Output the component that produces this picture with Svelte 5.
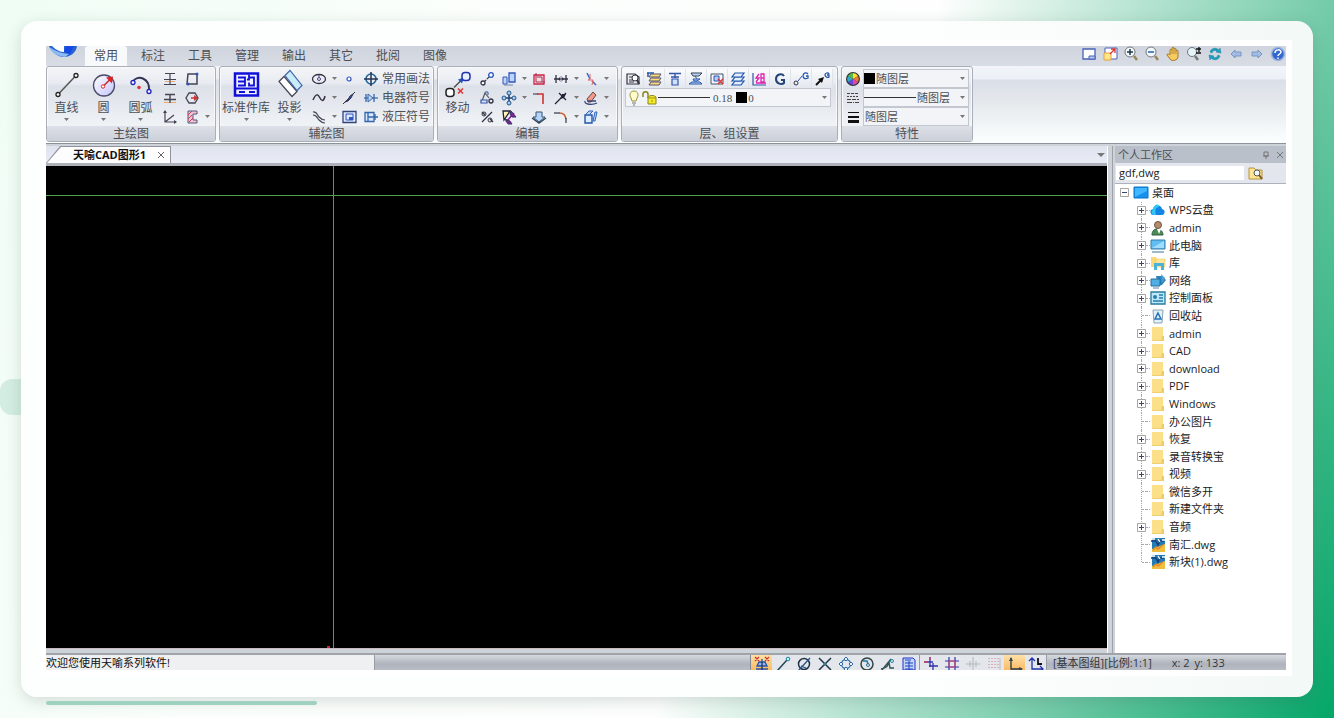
<script lang="ts">
    type Tool = { icon: string; name: string; drop?: boolean; label?: string };
    type Node = { icon: string; name: string; expand?: boolean };

    const big: Record<string, string> = {
        line: '<path d="M5 24 23 5" stroke="#555" stroke-width="1.5"/><circle cx="5" cy="24" r="2" fill="#fff" stroke="#222" stroke-width="1.3"/><circle cx="23" cy="5" r="2" fill="#fff" stroke="#222" stroke-width="1.3"/>',
        circle: '<defs><linearGradient id="disc" x2="1" y2="1"><stop offset="0" stop-color="#fff"/><stop offset="1" stop-color="#c4c4fb"/></linearGradient></defs><circle cx="14" cy="15" r="10.5" fill="url(#disc)" stroke="#4a4a6a" stroke-width="1.3"/><path d="m14 15 6-6" stroke="#c22" stroke-width="1.5"/><path d="m23 6-1 7-6-6z" fill="#d22"/><circle cx="13" cy="16" r="1.7" fill="#fff" stroke="#d22"/>',
        arc: '<path d="M6 11C10 4 23 7 22 20" stroke="#335" stroke-width="2"/><circle cx="6" cy="12" r="2" fill="#fff" stroke="#22b" stroke-width="1.3"/><circle cx="22" cy="21" r="2" fill="#fff" stroke="#22b" stroke-width="1.3"/><circle cx="12" cy="17" r="1.8" fill="#d33"/>',
        library: '<path d="M3 3h23v22H3z" fill="#eef0ff" stroke="#1010d8" stroke-width="2.5"/><path d="M6 7h7v4H6m0 4h7v-4M17 4v5h-2m2-2h5v8h-5v-3M4 18h21M7 21.500h6m4 0h6" stroke="#1010d8" stroke-width="1.8"/>',
        project: '<path d="m3 11 5-5 13 15-5 5z" fill="#fff" stroke="#445" stroke-width="1.2"/><path d="m9 5 5-5 12 15-5 5z" fill="#c8ecfa" stroke="#46a" stroke-width="1.2"/>',
        move: '<path d="m10 17 8-8" stroke="#444" stroke-width="1.3"/><path d="m20 7-2 6-4-4z" fill="#25b"/><rect x="18" y="2" width="8" height="8" rx="3" fill="#e8efff" stroke="#23a" stroke-width="1.5"/><rect x="2" y="18" width="8" height="8" rx="3" fill="#fff" stroke="#222" stroke-width="1.5"/><path d="m14 18 5 5m0-5-5 5" stroke="#d33" stroke-width="1.5"/>',
    };

    const small: Record<string, string> = {
        parallel: '<path d="M3 2.500h10M8 3v10M2 8.500h12M2 13.500h12" stroke="#445" stroke-width="1.2"/><path d="M3 10.500h4m2 0h4" stroke="#f0a868"/>',
        midline: '<path d="M3 4.500h10M2 9.500h12M8 5v8" stroke="#445" stroke-width="1.4"/><path d="M2 12.500h5m2 0h5" stroke="#f0a868"/>',
        angle: '<path d="M3 2v11h11M3 13l9-7" stroke="#445" stroke-width="1.2"/><path d="m1 4 2-3 2 3zM12 11l3 2-3 2z" fill="#445"/>',
        rect: '<path d="M4 3h9v10H3z" stroke="#445" stroke-width="1.5"/><circle cx="13" cy="3" r="1.5" fill="#35b"/><circle cx="4" cy="13" r="1.5" fill="#35b"/>',
        polygon: '<path d="m5 3 6 0 3 5-3 5H5L2 8z" stroke="#445" stroke-width="1.3"/><path d="M7 8h6" stroke="#c33" stroke-width="1.5"/><path d="m10 5 4 3-4 3z" fill="#c33"/>',
        hatch: '<path d="M4 2h9v3H9v6h4v3H4z" fill="#f7c4d0" stroke="#535580"/><path d="m4 6 4-4M4 10l4-4M5 13l4-4" stroke="#d35"/>',
        ellipse: '<ellipse cx="8" cy="8" rx="6.5" ry="4.500" stroke="#334" stroke-width="1.3"/><circle cx="8" cy="8" r="1.5" stroke="#448"/><path d="M8 4v2" stroke="#448"/>',
        spline: '<path d="M2 10c3-7 5-6 7-2s4 3 5-2" stroke="#334" stroke-width="1.5"/>',
        wave: '<path d="M2 3c4-1 4 3 6 5s3 3 6 3M2 6c4 0 4 3 6 5s3 3 6 3" stroke="#445" stroke-width="1.2"/>',
        point: '<circle cx="8" cy="8" r="2" fill="#fff" stroke="#35b" stroke-width="1.2"/>',
        stroke: '<path d="M2 14 14 2" stroke="#334"/><path d="m4 12 3-2 2-4 3-2-2 4-3 3z" fill="#35a" stroke="#335"/>',
        frame: '<path d="M2 2.500h13v11H2z" fill="#dde9ff" stroke="#347" stroke-width="1.3"/><path d="M5 5h7v6H5z" stroke="#35b"/><path d="M8 8h4v3H8z" fill="#35b"/>',
        target: '<circle cx="8" cy="8" r="5" stroke="#269" stroke-width="1.6"/><path d="M8 1v14M1 8h14" stroke="#235" stroke-width="1.5"/>',
        diode: '<path d="M1 8h14" stroke="#36a" stroke-width="1.2"/><path d="M5 4v8l5-4z" fill="#bcd4f4" stroke="#36a"/><path d="M11 4v8M3 4v8" stroke="#36a" stroke-width="1.3"/>',
        hydraulic: '<path d="M2 3.500h9v9H2z" fill="#dbe8fb" stroke="#36a" stroke-width="1.3"/><path d="M5 4v8M5 8h10M12 5v6" stroke="#36a" stroke-width="1.3"/>',
        copy: '<path d="m5 11 6-6" stroke="#334" stroke-width="1.2" stroke-dasharray="3 1"/><circle cx="4" cy="12" r="2" fill="#fff" stroke="#334" stroke-width="1.3"/><circle cx="12" cy="4" r="2.3" fill="#fff" stroke="#25b" stroke-width="1.3"/>',
        rotate: '<path d="M3 11 6 3l4 5" stroke="#556" stroke-width="1.2"/><path d="M2 10h6v3H2z" fill="#dce8fb" stroke="#35a" stroke-width="1.2"/><circle cx="12" cy="11" r="2" stroke="#334" stroke-width="1.3"/><path d="M6 2h3v3" stroke="#35a"/>',
        percent: '<path d="M13 3 3 13M3 3l3 3m5 4 3 3" stroke="#334" stroke-width="1.3"/><circle cx="5" cy="5" r="2" stroke="#334"/><circle cx="11" cy="11" r="2" stroke="#334"/>',
        scale: '<path d="M2 6h4v7H2z" fill="#bdd6f6" stroke="#35b"/><path d="M8 2h6v9H8z" fill="#b9d5fb" stroke="#35b" stroke-width="1.3"/><path d="M3 14h9" stroke="#68a"/>',
        array: '<g fill="#a9caf3" stroke="#258"><circle cx="8" cy="3" r="2"/><circle cx="8" cy="13" r="2"/><circle cx="3" cy="8" r="2"/><circle cx="13" cy="8" r="2"/></g><path d="M8 5v6M5 8h6" stroke="#247" stroke-width="1.6"/>',
        stretch: '<path d="M2 2h7L3 11z" fill="#fff6b8" stroke="#223" stroke-width="1.3"/><path d="m5 13 8-9" stroke="#829" stroke-width="1.5"/><path d="m10 2 5 6-4 0-2-3zM4 10l3 5h4l-2-3z" fill="#829" stroke="#336"/>',
        crop: '<path d="M3 4h10v9H3z" fill="#fbd8df" stroke="#c24" stroke-width="1.3"/><path d="M5 2v9h9M6 6h5v5" stroke="#935"/>',
        corner: '<path d="M6 4h6v10" stroke="#c33" stroke-width="1.6"/><path d="M2 4h5" stroke="#556" stroke-width="1.3"/>',
        down: '<path d="M5 3h6v5h3l-6 5-6-5h3z" fill="#b4d4f9" stroke="#357"/><path d="m1 9 7 5 7-5" stroke="#345" stroke-width="1.5"/>',
        trim: '<path d="M1 8h14M3 4v8M13 4v8" stroke="#334" stroke-width="1.3"/><path d="M8 5v6" stroke="#88a"/><path d="m5 8 2-2v4zM11 8 9 6v4z" fill="#334"/>',
        extend: '<path d="M2 14 13 3" stroke="#223" stroke-width="1.3"/><path d="m6 3 7 7" stroke="#223" stroke-width="1.3"/><path d="M9 4h4l-2 4-4 1z" fill="#223"/>',
        fillet: '<path d="M1 4h6" stroke="#445" stroke-width="1.3"/><path d="M6 4c5 0 6 2 7 6" stroke="#c65a2c" stroke-width="1.5"/><path d="M13 9v5" stroke="#445" stroke-width="1.3"/>',
        break: '<path d="m4 2 3 6M9 10l4 4" stroke="#46b" stroke-width="1.5"/><path d="M7 3v5l-2 1 5 0-1 5" stroke="#d66"/>',
        erase: '<path d="M4 9 10 2l3 3-5 7H5z" fill="#f29a87" stroke="#644"/><path d="M2 11c-1 4 8 4 12 2M5 11h8" stroke="#347" stroke-width="1.3"/>',
        box: '<path d="M2 6h7v8H2z" fill="#dcebff" stroke="#25a" stroke-width="1.4"/><path d="m3 5 3-3h4L7 5M12 3h2l-2 9h-2z" fill="#b4d0f7" stroke="#36b"/>',
        layerList: '<path d="M2 3h8l4 3v7H2z" fill="#eee" stroke="#334" stroke-width="1.2"/><path d="M4 6h4M4 9h4M4 11h5" stroke="#334"/><circle cx="10" cy="7" r="3" fill="#fff" stroke="#334"/><path d="m12 9 2 4" stroke="#334" stroke-width="2"/>',
        layerPick: '<path d="M5 3h10l-2 3H3zM5 7h10l-2 3H3zM5 11h10l-2 3H3z" fill="#fdd982" stroke="#556"/><path d="M1 2h7M2 2v4" stroke="#25a" stroke-width="1.5"/>',
        layerTop: '<path d="M2 2.500h12M8 3v4M4 6h8" stroke="#35a" stroke-width="1.4"/><path d="M5 8h6v6H5z" fill="#cfe0fb" stroke="#35a" stroke-width="1.2"/>',
        layerMerge: '<path d="M3 2h11l-3 3H5z" fill="#bdd6f6" stroke="#345"/><path d="M5 8h7l-3 2H6zM1 13h13l-2-2H4z" fill="#bdd6f6" stroke="#25a"/><path d="m7 5 2 3" stroke="#35a"/>',
        layerOff: '<path d="M2 3h12v10H2z" fill="#f3f6ff" stroke="#456"/><path d="M5 5h5v5H5z" fill="#b4cdfb" stroke="#35a"/><path d="m9 8 5 5m0-5-5 5" stroke="#d33" stroke-width="1.5"/>',
        layers: '<g fill="#e2edfd" stroke="#25a" stroke-width="1.2"><path d="M5 10h9l-3 4H2z"/><path d="M5 6h9l-3 4H2z"/><path d="M5 2h9l-3 4H2z"/></g>',
        group: '<path d="M2 2v12h13" stroke="#35a" stroke-width="1.2"/><path d="m8 3-3 4h3l-3 4M10 3h3v8h-3zM10 7h3M5 12h10" stroke="#e022b0" stroke-width="1.3"/>',
        g: '<path d="M12 5C10 2 4 3 4 8s6 6 8 4V9H9" stroke="#247" stroke-width="2"/>',
        gLink: '<circle cx="3" cy="12" r="2" stroke="#334"/><path d="m5 10 4-5" stroke="#35a"/><path d="M15 3c-2-2-5-1-5 2s3 3 5 2V5h-2" stroke="#25a" stroke-width="1.3"/>',
        gArrow: '<path d="m2 14 5-5" stroke="#111" stroke-width="2"/><path d="m10 6-6 2 4 4z" fill="#111"/><path d="M15 3c-1-2-4-1-4 1s3 3 4 2V4h-2" stroke="#25a" stroke-width="1.3"/>',
        bulb: '<path d="M8 1C4 1 3 5 5 8l1 3h4l1-3c2-3 1-7-3-7z" fill="#fffccb" stroke="#99913f"/><path d="M6 13h4M7 15h2" stroke="#777"/>',
        lock: '<path d="M1 7V4c0-3 5-3 5 0v4" stroke="#8a8420" stroke-width="1.5"/><path d="M6 7c2-2 6-2 8 0v7H6z" fill="#f4ea28" stroke="#8a8420"/><path d="M6 8h8M10 10v2" stroke="#998e20"/>',
        color: '<circle cx="8" cy="8" r="7" fill="#333"/><path d="M8 8V2a6 6 0 0 1 5 3z" fill="#fd3"/><path d="m8 8 5-3a6 6 0 0 1 0 6z" fill="#e73"/><path d="m8 8 5 3a6 6 0 0 1-5 3z" fill="#e2489b"/><path d="M8 8v6a6 6 0 0 1-5-3z" fill="#64d"/><path d="m8 8-5 3a6 6 0 0 1 0-6z" fill="#3ac"/><path d="M8 8 3 5a6 6 0 0 1 5-3z" fill="#5b4"/>',
        linetype: '<path d="M2 3.500h12" stroke="#444" stroke-dasharray="3 1"/><path d="M2 6.500h12" stroke="#444" stroke-dasharray="2 1"/><path d="M2 9.500h12" stroke="#444" stroke-dasharray="4 1"/><path d="M2 12.500h12" stroke="#444" stroke-dasharray="5 1 1 1"/>',
        weight: '<path d="M3 3.500h11" stroke="#111"/><path d="M3 8h11" stroke="#111" stroke-width="2"/><path d="M3 12.500h11" stroke="#111" stroke-width="3"/>',
        window: '<path d="M2 3h12v10H2z" fill="#fff" stroke="#4a62b8" stroke-width="1.3"/><path d="M8 10h6v3H8z" fill="#b5c8f0" stroke="#4a62b8"/>',
        fit: '<path d="M3 2h12v11H3z" fill="#fff" stroke="#4a62b8"/><path d="M2 7h7v7H2z" fill="#ffe88d" stroke="#e9a03c"/><path d="m8 8 5-5m-4 0h4v4" stroke="#d33" stroke-width="1.3"/>',
        zoomIn: '<circle cx="7" cy="6" r="5" fill="#f2f8fc" stroke="#777"/><path d="M7 3v6M4 6h6" stroke="#234" stroke-width="1.5"/><path d="m11 10 3 4" stroke="#9a8758" stroke-width="2.5"/>',
        zoomOut: '<circle cx="7" cy="6" r="5" fill="#f2f8fc" stroke="#777"/><path d="M4 6h6" stroke="#235fa8" stroke-width="1.5"/><path d="m11 10 3 4" stroke="#9a8758" stroke-width="2.5"/>',
        hand: '<path d="M5 9V4c0-1 2-1 2 0V2c0-1 2-1 2 0v1c0-1 2-1 2 0v2c0-1 2-1 2 0v6c0 3-6 5-8 2L2 9c0-2 2-1 3 0z" fill="#f5cb62" stroke="#a37a2d"/><path d="M7 4v4M9 3v5M11 5v3" stroke="#b88a35"/>',
        zoomDyn: '<circle cx="6" cy="6" r="4.500" fill="#e5f4f6" stroke="#678"/><path d="m9 10 3 4" stroke="#777" stroke-width="2.5"/><path d="M13 1v5M10 3h5M10 7h5" stroke="#111" stroke-width="1.3"/>',
        refresh: '<path d="M3 6c1-4 6-5 9-2l1-2 1 5-5-1 1-1C8 4 6 4 5 7zM13 10c-1 4-6 5-9 2l-1 2-1-5 5 1-1 1c2 1 4 1 5-2z" fill="#1ca0bd" stroke="#1b7ea0" stroke-width=".5"/>',
        back: '<path d="m3 8 4-4v2h6v4H7v2z" fill="#a4bce2" stroke="#7895c8"/>',
        forward: '<path d="M13 8 9 4v2H3v4h6v2z" fill="#a4bce2" stroke="#7895c8"/>',
        help: '<circle cx="8" cy="8" r="6.5" fill="#3468cf" stroke="#9fb5e0" stroke-width="1.5"/><path d="M5 7c0-4 6-4 6-1 0 2-3 2-3 4M8 11.500V13" stroke="#fff" stroke-width="1.5"/>',
        search: '<path d="M1 3h5l2 2h6v9H1z" fill="#ffe591" stroke="#b99336"/><circle cx="9" cy="8" r="3" fill="#f2f8fc" stroke="#555"/><path d="m11 10 3 4" stroke="#755a33" stroke-width="2"/>',
        snap: '<path d="M8 3v3M5 6h6l2 4H3zM2 13h12" fill="#9db6e8" stroke="#25a" stroke-width="1.3"/><path d="m1 1 4 4m0-4L1 5M11 1l4 4m0-4-4 4" stroke="#c33" stroke-width="1.2"/><path d="M8 6v8" stroke="#236" stroke-width="1.3"/>',
        snapEnd: '<path d="M2 15 12 4" stroke="#245" stroke-width="1.5"/><circle cx="13" cy="3" r="1.8" fill="#bfe" stroke="#27a"/>',
        snapTan: '<circle cx="8" cy="8" r="5.5" stroke="#234" stroke-width="1.5"/><path d="M2 15 14 2M5 10l5 2" stroke="#258" stroke-width="1.3"/>',
        snapCross: '<path d="m2 2 12 12M14 2 2 14" stroke="#234" stroke-width="1.5"/><circle cx="8" cy="8" r="1.5" fill="#379"/>',
        snapQuad: '<circle cx="8" cy="8" r="4.500" stroke="#27a" stroke-width="1.3"/><g fill="#e8f2ff" stroke="#36a"><path d="m8 1 2 2-2 2-2-2zM8 11l2 2-2 2-2-2zM3 6l2 2-2 2-2-2zM13 6l2 2-2 2-2-2z"/></g>',
        snapCenter: '<circle cx="8" cy="8" r="6" stroke="#344" stroke-width="1.5"/><path d="m4 5 4 0 1 3" stroke="#27a" stroke-width="1.5"/><circle cx="9" cy="9" r="1.5" stroke="#27a"/>',
        snapPerp: '<path d="M2 14 11 3M1 13c6-1 7-3 8-7M9 6l1 6h4" stroke="#355" stroke-width="1.4"/><circle cx="12" cy="5" r="1.5" stroke="#28a"/>',
        snapSet: '<path d="M2 2h10l2 2v10H2z" fill="#c3d5fa" stroke="#23c"/><path d="M4 4h6M4 7h8M4 10h8M4 13h8M8 5v9" stroke="#24b"/>',
        ortho: '<path d="M7 1v10M1 6h9M10 7v8M6 10h9" stroke="#33a" stroke-width="1.3"/><path d="M1 6h4M7 1v3" stroke="#c46" stroke-width="1.3"/>',
        grid: '<path d="M5 1v14M11 1v14M1 5h14M1 11h14" stroke="#33a" stroke-width="1.2"/><path d="M5 5h6v6H5z" stroke="#c46"/>',
        track: '<path d="M8 1v14M1 8h14M5 5v6M11 5v6" stroke="#b5b8b8"/>',
        dots: '<path d="M3 2v13M6 2v13M9 2v13M12 2v13" stroke="#d77a88" stroke-dasharray="1 2"/><path d="M14 2v13" stroke="#bbb"/>',
        ucs: '<path d="M4 2v11h11" stroke="#234" stroke-width="1.3"/><path d="m2 5 2-4 2 4zM12 11l4 2-4 2z" fill="#345"/>',
        ucs2: '<path d="M4 3v10h11M1 5l3-3 3 3M12 10l3 3-3 3" stroke="#23a" stroke-width="1.3"/><path d="M10 2v6h4" stroke="#112" stroke-width="1.8"/>',
        desktop: '<path d="M1 2h14v11H1z" fill="#1692ee" stroke="#0874c4"/><path d="M2 3h12v3L2 12z" fill="#40b7ff"/>',
        cloud: '<path d="M4 13a3 3 0 0 1-1-6c1-5 8-5 9 0 4 1 3 6 0 6z" fill="#1286e6"/><path d="M2 9c3-9 7-7 7-4-4 0-4 4-3 8H4c-2-1-3-2-2-4z" fill="#30c8f3"/>',
        user: '<path d="M2 15c0-4 2-6 5-6s6 2 6 6z" fill="#4c8b54" stroke="#2d6140"/><circle cx="8" cy="5" r="3.5" fill="#b58b68" stroke="#6b5546"/><path d="m7 9 2 5 2-5z" fill="#fff"/>',
        pc: '<path d="M1 2h14v9H1z" fill="#62bdf5" stroke="#357fa8"/><path d="m2 10 12-7v7z" fill="#a1dcff"/><path d="M2 14h12" stroke="#7ba3b8" stroke-width="1.5"/>',
        lib: '<path d="M1 2h5l1 2v8H1z" fill="#fbd976"/><path d="M6 4h9v8H6z" fill="#ffe799" stroke="#e4bd58" stroke-width=".5"/><path d="M4 15V8h10v7h-3v-4H7v4z" fill="#49b3db"/>',
        network: '<path d="M6 3h6l4 4-4 5H8z" fill="#2784bf"/><path d="M1 6h9v7H1z" fill="#4faee4" stroke="#276f9d"/><path d="M3 15h6" stroke="#58a"/><path d="m11 1 4 4-3 5z" fill="#4a9fd4"/>',
        control: '<path d="M1 2h14v12H1z" fill="#bde8fb" stroke="#297b9e" stroke-width="1.3"/><circle cx="5" cy="7" r="2" fill="#287fa9"/><path d="M9 5h4M9 8h4M3 11h10" stroke="#287fa9" stroke-width="1.5"/>',
        bin: '<path d="m3 2 1 13h8l1-13z" fill="#e3f0f7" stroke="#8aa5b5"/><path d="m8 5 3 6H5z" stroke="#2671b8" stroke-width="1.5"/>',
        folder: '<path d="M2 1h11v14H2z" fill="#fbe089"/><path d="M12 10h2v5h-3z" fill="#f0cb60"/><path d="M2 14.500h11" stroke="#f0cf70"/>',
        dwg: '<path d="M2 1h13v14H2z" fill="#247cb6"/><path d="M2 15V12L15 7v8z" fill="#f0bd3f"/><path d="m3 13 3-3 2 2 5-4" stroke="#e58a25" stroke-width="1.5"/><path d="M1 4h5l2 4 2-4h4" stroke="#173d78" stroke-width="1.5"/><path d="M2 2h3M8 2l2 3M12 3h3" stroke="#fff" stroke-width="1.3"/>',
    };

    const tabs = ["常用", "标注", "工具", "管理", "输出", "其它", "批阅", "图像"];

    const quick: Tool[] = [
        { icon: "window", name: "窗口" },
        { icon: "fit", name: "全屏" },
        { icon: "zoomIn", name: "放大" },
        { icon: "zoomOut", name: "缩小" },
        { icon: "hand", name: "平移" },
        { icon: "zoomDyn", name: "动态缩放" },
        { icon: "refresh", name: "刷新" },
        { icon: "back", name: "后退" },
        { icon: "forward", name: "前进" },
        { icon: "help", name: "帮助" },
    ];

    const groups: { title: string; cols: number; big: Tool[]; small: Tool[] }[] = [
        {
            title: "主绘图",
            cols: 2,
            big: [
                { icon: "line", name: "直线", drop: true },
                { icon: "circle", name: "圆", drop: true },
                { icon: "arc", name: "圆弧", drop: true },
            ],
            small: [
                { icon: "parallel", name: "平行线" },
                { icon: "rect", name: "矩形" },
                { icon: "midline", name: "中线" },
                { icon: "polygon", name: "多边形" },
                { icon: "angle", name: "角度线" },
                { icon: "hatch", name: "剖面线", drop: true },
            ],
        },
        {
            title: "辅绘图",
            cols: 3,
            big: [
                { icon: "library", name: "标准件库", drop: true },
                { icon: "project", name: "投影", drop: true },
            ],
            small: [
                { icon: "ellipse", name: "椭圆", drop: true },
                { icon: "point", name: "点" },
                { icon: "target", name: "常用画法", label: "常用画法" },
                { icon: "spline", name: "样条", drop: true },
                { icon: "stroke", name: "笔划" },
                { icon: "diode", name: "电器符号", label: "电器符号" },
                { icon: "wave", name: "波浪线", drop: true },
                { icon: "frame", name: "图框" },
                { icon: "hydraulic", name: "液压符号", label: "液压符号" },
            ],
        },
        {
            title: "编辑",
            cols: 5,
            big: [{ icon: "move", name: "移动" }],
            small: [
                { icon: "copy", name: "复制" },
                { icon: "scale", name: "缩放", drop: true },
                { icon: "crop", name: "裁剪" },
                { icon: "trim", name: "修剪", drop: true },
                { icon: "break", name: "打断", drop: true },
                { icon: "rotate", name: "旋转" },
                { icon: "array", name: "阵列", drop: true },
                { icon: "corner", name: "拐角" },
                { icon: "extend", name: "延伸", drop: true },
                { icon: "erase", name: "删除", drop: true },
                { icon: "percent", name: "比例" },
                { icon: "stretch", name: "拉伸" },
                { icon: "down", name: "下移" },
                { icon: "fillet", name: "圆角", drop: true },
                { icon: "box", name: "块", drop: true },
            ],
        },
    ];

    const layerTools = ["layerList", "layerPick", "layerTop", "layerMerge", "layerOff", "layers", "group", "g", "gLink", "gArrow"];
    const snapTools = ["snap", "snapEnd", "snapTan", "snapCross", "snapQuad", "snapCenter", "snapPerp", "snapSet"];
    const gridTools = ["ortho", "grid", "track", "dots", "ucs", "ucs2"];

    const tree: Node[] = [
        { icon: "cloud", name: "WPS云盘", expand: true },
        { icon: "user", name: "admin", expand: true },
        { icon: "pc", name: "此电脑", expand: true },
        { icon: "lib", name: "库", expand: true },
        { icon: "network", name: "网络", expand: true },
        { icon: "control", name: "控制面板", expand: true },
        { icon: "bin", name: "回收站" },
        { icon: "folder", name: "admin", expand: true },
        { icon: "folder", name: "CAD", expand: true },
        { icon: "folder", name: "download", expand: true },
        { icon: "folder", name: "PDF", expand: true },
        { icon: "folder", name: "Windows", expand: true },
        { icon: "folder", name: "办公图片" },
        { icon: "folder", name: "恢复", expand: true },
        { icon: "folder", name: "录音转换宝", expand: true },
        { icon: "folder", name: "视频", expand: true },
        { icon: "folder", name: "微信多开" },
        { icon: "folder", name: "新建文件夹" },
        { icon: "folder", name: "音频", expand: true },
        { icon: "dwg", name: "南汇.dwg" },
        { icon: "dwg", name: "新块(1).dwg" },
    ];

    let activeTab = $state("常用");
    let active = $state<string[]>(["snap", "ucs"]);
    let filter = $state("gdf,dwg");

    // Toggles one of the status bar modes
    function toggle(name: string) {
        active = active.includes(name) ? active.filter((n) => n !== name) : [...active, name];
    }
</script>

{#snippet icon(name: string)}
    <svg class="icon" viewBox="0 0 16 16" fill="none" aria-hidden="true">{@html small[name]}</svg>
{/snippet}

{#snippet arrow()}
    <svg class="arrow" viewBox="0 0 5 3" aria-hidden="true"><path d="M0 0h5L2.500 3z" fill="#777" /></svg>
{/snippet}

<div class="page">
    <div class="accent-side"></div>
    <div class="accent-bottom"></div>
    <div class="card">
        <main class="app">
            <header class="topbar">
                <button class="logo" aria-label="菜单">
                    <svg viewBox="0 0 28 12" width="28" height="12" fill="none">
                        <path d="M0 0h28c-1 7-7 11-13 11S2 6 0 0z" fill="#2563cf" />
                        <path d="M0 1c5 3 10 6 20 7l-4 3C8 10 2 6 0 1z" fill="#8dbcf5" />
                        <path d="M3 0h12v6C11 6 7 4 3 0z" fill="#fff" />
                        <path d="M17 0h8l-4 8-6-2z" fill="#1747e4" />
                    </svg>
                </button>
                <nav class="tabs">
                    {#each tabs as tab}
                        <button class="tab" class:active={tab === activeTab} onclick={() => (activeTab = tab)}>{tab}</button>
                    {/each}
                </nav>
                <div class="quick">
                    {#each quick as tool}
                        <button aria-label={tool.name}>{@render icon(tool.icon)}</button>
                    {/each}
                </div>
            </header>

            <div class="ribbon">
                {#each groups as group, i}
                    <section class="group group-{i + 1}">
                        <div class="group-body">
                            {#each group.big as tool}
                                <button class="big">
                                    <svg class="big-icon" viewBox="0 0 28 28" fill="none" aria-hidden="true">{@html big[tool.icon]}</svg>
                                    <span>{tool.name}</span>
                                    {#if tool.drop}{@render arrow()}{/if}
                                </button>
                            {/each}
                            <div class="tools cols-{group.cols}">
                                {#each group.small as tool}
                                    <button class="tool" aria-label={tool.name}>
                                        <span class="tool-icon">{@render icon(tool.icon)}</span>
                                        {#if tool.label}<span>{tool.label}</span>{/if}
                                        {#if tool.drop}<span class="drop">{@render arrow()}</span>{/if}
                                    </button>
                                {/each}
                            </div>
                        </div>
                        <h2>{group.title}</h2>
                    </section>
                {/each}

                <section class="group layer-group">
                    <div class="group-body stack">
                        <div class="layer-tools">
                            {#each layerTools as name}
                                <button aria-label={name}>{@render icon(name)}</button>
                            {/each}
                        </div>
                        <div class="combo layer-combo">
                            {@render icon("bulb")}
                            {@render icon("lock")}
                            <span class="rule"></span>
                            <span class="mono">0.18</span>
                            <span class="swatch"></span>
                            <select class="mono" aria-label="图层"><option>0</option></select>
                            {@render arrow()}
                        </div>
                    </div>
                    <h2>层、组设置</h2>
                </section>

                <section class="group props-group">
                    <div class="group-body stack">
                        <div class="prop">
                            {@render icon("color")}
                            <div class="combo">
                                <span class="swatch"></span>
                                <select aria-label="颜色"><option>随图层</option></select>
                                {@render arrow()}
                            </div>
                        </div>
                        <div class="prop">
                            {@render icon("linetype")}
                            <div class="combo">
                                <span class="rule"></span>
                                <select aria-label="线型"><option>随图层</option></select>
                                {@render arrow()}
                            </div>
                        </div>
                        <div class="prop">
                            {@render icon("weight")}
                            <div class="combo">
                                <select aria-label="线宽"><option>随图层</option></select>
                                {@render arrow()}
                            </div>
                        </div>
                    </div>
                    <h2>特性</h2>
                </section>
            </div>

            <div class="workspace">
                <div class="document">
                    <div class="doc-strip">
                        <div class="doc-tab">
                            <div class="doc-tab-face">
                                <span>天喻CAD图形1</span>
                                <button class="close" aria-label="关闭">
                                    <svg viewBox="0 0 8 8" width="8" height="8"><path d="m1 1 6 6m0-6L1 7" stroke="#666" /></svg>
                                </button>
                            </div>
                        </div>
                        <button class="doc-menu" aria-label="文档列表">
                            <svg viewBox="0 0 8 4" width="8" height="4"><path d="M0 0h8L4 4z" fill="#777" /></svg>
                        </button>
                    </div>
                    <div class="canvas">
                        <span class="cross-x"></span>
                        <span class="cross-y"></span>
                        <span class="origin"></span>
                    </div>
                </div>

                <aside class="panel">
                    <div class="panel-head">
                        <h3>个人工作区</h3>
                        <button aria-label="固定">
                            <svg viewBox="0 0 8 8" width="8" height="8" fill="none"><path d="M2 1h4v4H2zM1 5h6M4 5v3" stroke="#777" /></svg>
                        </button>
                        <button aria-label="关闭面板">
                            <svg viewBox="0 0 8 8" width="8" height="8"><path d="m1 1 6 6m0-6L1 7" stroke="#777" /></svg>
                        </button>
                    </div>
                    <div class="panel-search">
                        <input type="text" aria-label="文件类型" bind:value={filter} />
                        <button aria-label="搜索">{@render icon("search")}</button>
                    </div>
                    <ul class="tree">
                        <li class="root">
                            <button class="expander" aria-label="折叠">
                                <svg viewBox="0 0 9 9" width="9" height="9" fill="none"><path d="M.5.5h8v8h-8z" fill="#fff" stroke="#a5a5a5" /><path d="M2 4.500h5" stroke="#446" /></svg>
                            </button>
                            {@render icon("desktop")}
                            <span>桌面</span>
                        </li>
                        {#each tree as node}
                            <li class="child">
                                {#if node.expand}
                                    <button class="expander" aria-label="展开 {node.name}">
                                        <svg viewBox="0 0 9 9" width="9" height="9" fill="none"><path d="M.5.5h8v8h-8z" fill="#fff" stroke="#a5a5a5" /><path d="M2 4.500h5M4.500 2v5" stroke="#446" /></svg>
                                    </button>
                                {:else}
                                    <span class="leaf"></span>
                                {/if}
                                <span class="branch"></span>
                                {@render icon(node.icon)}
                                <span>{node.name}</span>
                            </li>
                        {/each}
                    </ul>
                </aside>
            </div>

            <footer class="status">
                <p class="message">欢迎您使用天喻系列软件!</p>
                <div class="modes">
                    {#each snapTools as name}
                        <button class:on={active.includes(name)} aria-label={name} onclick={() => toggle(name)}>{@render icon(name)}</button>
                    {/each}
                </div>
                <div class="modes">
                    {#each gridTools as name}
                        <button class:on={active.includes(name)} aria-label={name} onclick={() => toggle(name)}>{@render icon(name)}</button>
                    {/each}
                </div>
                <div class="info">
                    <span class="scale">[基本图组][比例:1:1]</span>
                    <span>x: 2</span>
                    <span>y: 133</span>
                </div>
            </footer>
        </main>
    </div>
</div>

<style>
    :global(body) {
        margin: 0;
    }

    .page {
        position: relative;
        display: flex;
        min-height: 100vh;
        padding: 21px;
        box-sizing: border-box;
        overflow: hidden;
        background: linear-gradient(112deg, #effdf4 0%, #fbfefc 30%, #fdfefd 58%, #74cba9 82%, #04a668 100%);
        color: #4c4f55;
        font-family: "Open Sans", "Noto Sans CJK SC", sans-serif;
        font-size: 11px;
        line-height: 16px;
    }

    .accent-side {
        position: absolute;
        left: 0;
        top: 379px;
        width: 46px;
        height: 36px;
        border-radius: 12px;
        background: #d3ede2;
    }

    .accent-bottom {
        position: absolute;
        left: 46px;
        bottom: 13px;
        z-index: 1;
        width: 271px;
        height: 4px;
        border-radius: 2px;
        background: #9fd1c0;
    }

    .card {
        position: relative;
        display: flex;
        flex: 1;
        min-width: 0;
        padding: 25px 27px 27px 25px;
        border-radius: 16px;
        background: linear-gradient(90deg, #fdfefe 70%, #f3f9f7 100%);
        box-shadow: 0 4px 16px rgba(60, 90, 80, 0.2);
    }

    .app {
        display: flex;
        flex: 1;
        flex-direction: column;
        min-width: 0;
        background: #c9cdd6;
        box-shadow: 0 0 0 6px #fff;
    }

    button {
        display: flex;
        align-items: center;
        justify-content: center;
        padding: 0;
        border: 0;
        background: none;
        color: inherit;
        font: inherit;
        cursor: pointer;
    }

    h2,
    h3,
    p,
    ul {
        margin: 0;
        padding: 0;
        font-size: inherit;
        font-weight: normal;
    }

    .icon {
        display: block;
        flex: none;
        width: 16px;
        height: 16px;
    }

    .arrow {
        flex: none;
        width: 5px;
        height: 3px;
    }

    .topbar {
        display: flex;
        height: 20px;
        background: linear-gradient(#d0d4de, #d8dce4);
        font-size: 12px;
    }

    .logo {
        align-self: flex-start;
        width: 28px;
        margin: 0 8px 0 3px;
    }

    .tabs {
        display: flex;
        gap: 5px;
        flex: 1;
    }

    .tab {
        width: 42px;
    }

    .tab.active {
        border-radius: 3px 3px 0 0;
        background: #f7f9fb;
    }

    .quick {
        display: flex;
        gap: 5px;
        padding-bottom: 4px;
    }

    .ribbon {
        display: flex;
        gap: 3px;
        padding-bottom: 1px;
        border-bottom: 1px solid #8d929a;
        background: linear-gradient(#f3f5f9 0, #eceff5 17%, #dadee7 18%, #e6eaee 50%, #fbfffe 100%);
        font-size: 12px;
    }

    .group {
        display: flex;
        flex-direction: column;
        box-sizing: border-box;
        border: 1px solid #a9aeb8;
        border-radius: 3px;
        background: linear-gradient(#f3f5f8 0, #e8ebf1 22%, #dce0e8 26%, #f0f3f6 80%);
        box-shadow: inset 0 0 0 1px #f8f9fb;
    }

    .group-1 {
        width: 170px;
    }

    .group-2 {
        width: 215px;
    }

    .group-3 {
        width: 181px;
    }

    .layer-group {
        width: 217px;
    }

    .props-group {
        width: 132px;
    }

    .group h2 {
        height: 15px;
        border-radius: 0 0 2px 2px;
        background: linear-gradient(#dde0e6, #cbcfd8);
        line-height: 15px;
        text-align: center;
    }

    .group-body {
        display: flex;
        height: 57px;
        padding: 2px 1px 0;
    }

    .big {
        flex-direction: column;
        justify-content: flex-start;
        width: 37px;
        line-height: 16px;
        white-space: nowrap;
    }

    .group-2 .big:first-child {
        width: 50px;
    }

    .big .arrow {
        margin-top: 2px;
    }

    .big-icon {
        flex: none;
        width: 28px;
        height: 31px;
    }

    .tools {
        display: grid;
        grid-auto-rows: 19px;
        align-content: start;
        justify-content: start;
    }

    .cols-2 {
        grid-template-columns: repeat(2, auto);
    }

    .cols-3 {
        grid-template-columns: repeat(3, auto);
    }

    .cols-5 {
        grid-template-columns: repeat(5, auto);
    }

    .tool {
        justify-content: flex-start;
        white-space: nowrap;
    }

    .tool-icon {
        display: flex;
        justify-content: center;
        width: 22px;
    }

    .drop {
        display: flex;
        justify-content: center;
        width: 8px;
    }

    .stack {
        flex-direction: column;
    }

    .layer-tools {
        display: flex;
        height: 19px;
    }

    .layer-tools button {
        width: 21px;
        border-right: 1px solid #dfe3ea;
        background: linear-gradient(#fafbfc, #e3e7ee);
    }

    .combo {
        display: flex;
        align-items: center;
        flex: 1;
        box-sizing: border-box;
        min-width: 0;
        height: 19px;
        padding-right: 3px;
        border: 1px solid #c3c7cf;
        background: #f2f4f7;
        font-size: 11px;
    }

    .layer-combo {
        flex: none;
        margin: 0 5px 0 2px;
    }

    select {
        flex: 1;
        min-width: 0;
        padding: 0 1px;
        border: 0;
        background: none;
        color: inherit;
        font: inherit;
        appearance: none;
    }

    .mono {
        font-family: "Liberation Serif", serif;
    }

    .rule {
        flex: none;
        width: 52px;
        height: 1px;
        background: #333;
    }

    .layer-combo .mono {
        margin: 0 4px 0 3px;
    }

    .layer-combo select.mono {
        margin: 0;
    }

    .swatch {
        flex: none;
        width: 11px;
        height: 11px;
        background: #000;
    }

    .prop {
        display: flex;
        align-items: center;
        gap: 2px;
        padding: 0 2px;
    }

    .workspace {
        display: flex;
        flex: 1;
        min-height: 0;
        padding-top: 2px;
        border-bottom: 2px solid #a0a3a8;
        background: #ced2d9;
    }

    .document {
        display: flex;
        flex: 1;
        flex-direction: column;
        min-width: 0;
        border-right: 1px solid #fff;
    }

    .doc-strip {
        display: flex;
        justify-content: space-between;
        height: 17px;
        padding-right: 2px;
        background: linear-gradient(#dfe3ed, #e9ecf5);
    }

    .doc-tab {
        width: 124px;
        padding: 1px 1px 0 0;
        background: #8f949c;
        clip-path: polygon(14px 0, 100% 0, 100% 100%, 0 100%);
    }

    .doc-tab-face {
        display: flex;
        align-items: center;
        justify-content: space-between;
        height: 16px;
        padding: 0 5px 0 27px;
        background: #fdfdfe;
        clip-path: polygon(15px 0, 100% 0, 100% 100%, 1px 100%);
        color: #111;
        font-weight: bold;
        white-space: nowrap;
    }

    .canvas {
        position: relative;
        flex: 1;
        margin-bottom: 4px;
        border-top: 3px solid #aeb2b8;
        border-bottom: 1px solid #c9b9bb;
        background: #000;
    }

    .cross-x,
    .cross-y,
    .origin {
        position: absolute;
    }

    .cross-x {
        top: 29px;
        left: 0;
        width: 100%;
        height: 1px;
        background: #4fa04f;
    }

    .cross-y {
        top: 0;
        left: 287px;
        width: 1px;
        height: 100%;
        background: #4fa04f;
    }

    .origin {
        bottom: 0;
        left: 281px;
        width: 3px;
        height: 2px;
        background: #c8283c;
    }

    .panel {
        display: flex;
        flex-direction: column;
        width: 171px;
        margin-left: 4px;
        padding-left: 2px;
        border-left: 1px solid #9da1a8;
    }

    .panel-head {
        display: flex;
        align-items: center;
        gap: 6px;
        height: 17px;
        padding: 0 2px 0 3px;
        background: #bac0ca;
    }

    .panel-head h3 {
        flex: 1;
    }

    .panel-search {
        display: flex;
        align-items: center;
        gap: 4px;
        height: 20px;
        padding-left: 1px;
        border-bottom: 1px solid #aeb2ba;
        background: #e3e6ed;
    }

    .panel-search input {
        width: 128px;
        height: 14px;
        box-sizing: border-box;
        padding: 0 3px;
        border: 0;
        background: #fff;
        color: #222;
        font: inherit;
    }

    .tree {
        display: flex;
        flex: 1;
        flex-direction: column;
        padding-bottom: 82px;
        background: #fff;
        color: #1c1c1c;
        list-style: none;
    }

    .tree li {
        position: relative;
        display: flex;
        align-items: center;
        flex: 1;
        min-height: 16px;
        padding-left: 5px;
        white-space: nowrap;
    }

    .tree li.child {
        padding-left: 22px;
    }

    .child::before {
        content: "";
        position: absolute;
        top: 0;
        left: 26px;
        height: 100%;
        border-left: 1px dotted #a8a8a8;
    }

    .child:last-child::before {
        height: 50%;
    }

    .expander,
    .leaf {
        position: relative;
        flex: none;
        width: 9px;
    }

    .leaf {
        width: 4px;
        margin-left: 5px;
        border-top: 1px dotted #a8a8a8;
    }

    .branch {
        width: 4px;
        border-top: 1px dotted #a8a8a8;
    }

    .root .icon {
        margin-left: 4px;
    }

    .tree .icon {
        margin-right: 3px;
    }

    .status {
        display: flex;
        height: 15px;
        overflow: hidden;
        background: linear-gradient(#d5d8de, #aeb3bc 60%, #b9bdc6);
    }

    .message {
        flex: none;
        width: 328px;
        border-right: 1px solid #9a9ea6;
        background: #eff0f2;
        color: #111;
    }

    .message + .modes {
        margin-left: auto;
        border-left: 1px solid #858a92;
    }

    .modes {
        display: flex;
        align-items: flex-start;
        border-right: 1px solid #989ca4;
        background: #e3e6ea;
    }

    .modes button {
        width: 21px;
        height: 18px;
    }

    .modes .on {
        background: linear-gradient(#fde0a8, #fbb355);
    }

    .info {
        display: flex;
        flex: none;
        gap: 5px;
        width: 233px;
        padding-left: 6px;
        color: #33363c;
    }

    .scale {
        margin-right: 15px;
    }
</style>
